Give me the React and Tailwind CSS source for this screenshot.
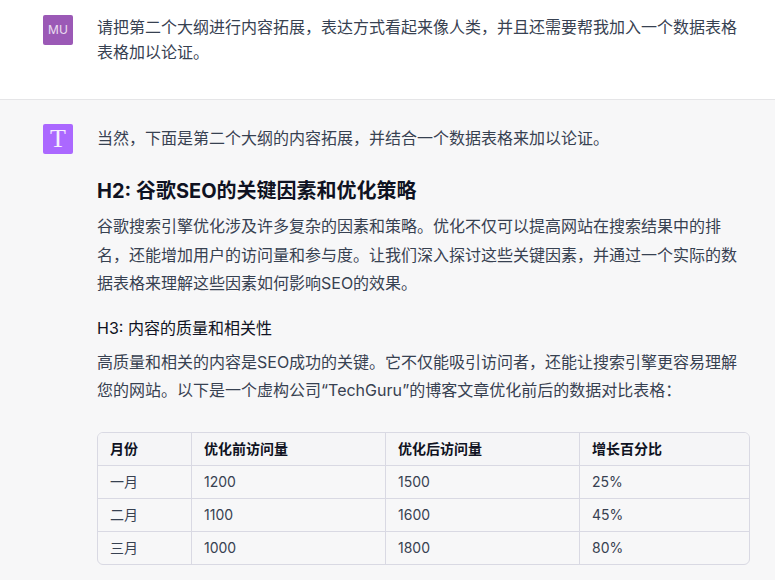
const ROWS = [
  ['一月', '1200', '1500', '25%'],
  ['二月', '1100', '1600', '45%'],
  ['三月', '1000', '1800', '80%'],
];

const HEAD = ['月份', '优化前访问量', '优化后访问量', '增长百分比'];

function Cell({ children, head, last, bottom }) {
  return (
    <div
      className={`flex items-center px-3 ${head ? 'bg-[#f5f5f7] font-semibold text-[#0f1222]' : ''} ${last ? '' : 'border-r border-[#d9d9e3]'} ${bottom ? 'h-[32px]' : 'h-[33px] border-b border-[#d9d9e3]'}`}
    >
      {children}
    </div>
  );
}

export default function App() {
  return (
    <div className="h-[580px] w-[775px] overflow-hidden bg-white text-[#374151] font-['Inter','Noto_Sans_CJK_SC',sans-serif]">
      <div className="flex h-[100px] border-b border-[#e5e5e7] pl-[43px] pr-[25px] pt-[15px]">
        <div className="flex h-[30px] w-[30px] shrink-0 items-center justify-center rounded-[2px] bg-[#9b59b6] text-[12px] text-white/80">
          MU
        </div>
        <p className="ml-6 text-[16px] leading-[25px]">
          请把第二个大纲进行内容拓展，表达方式看起来像人类，并且还需要帮我加入一个数据表格表格加以论证。
        </p>
      </div>
      <div className="flex h-[480px] bg-[#f7f7f8] pl-[43px] pr-[25px] pt-[24px]">
        <div className="flex h-[30px] w-[30px] shrink-0 items-center justify-center rounded-[2px] bg-[#ab68ff] font-['Liberation_Serif',serif] text-[26px] leading-none text-white/90">
          T
        </div>
        <div className="ml-6 min-w-0 flex-1">
          <p className="text-[16px] leading-[28px]">当然，下面是第二个大纲的内容拓展，并结合一个数据表格来加以论证。</p>
          <h2 className="mt-[25px] text-[20px] font-bold leading-[28px] text-[#0f1222]">H2: 谷歌SEO的关键因素和优化策略</h2>
          <p className="mt-[7px] text-[16px] leading-[28.5px]">
            谷歌搜索引擎优化涉及许多复杂的因素和策略。优化不仅可以提高网站在搜索结果中的排名，还能增加用户的访问量和参与度。让我们深入探讨这些关键因素，并通过一个实际的数据表格来理解这些因素如何影响SEO的效果。
          </p>
          <h3 className="mt-[18px] text-[16px] font-normal leading-[24px] text-[#0f1222]">H3: 内容的质量和相关性</h3>
          <p className="mt-[8px] text-[16px] leading-[28.5px]">
            高质量和相关的内容是SEO成功的关键。它不仅能吸引访问者，还能让搜索引擎更容易理解您的网站。以下是一个虚构公司“TechGuru”的博客文章优化前后的数据对比表格：
          </p>
          <div className="mt-[27px] grid w-[653px] grid-cols-[94px_194px_194px_1fr] overflow-hidden rounded-md border border-[#d9d9e3] text-[14px]">
            {HEAD.map((h, i) => (
              <Cell key={h} head last={i === 3}>{h}</Cell>
            ))}
            {ROWS.map((row, r) =>
              row.map((c, i) => (
                <Cell key={c + r + i} last={i === 3} bottom={r === 2}>{c}</Cell>
              ))
            )}
          </div>
        </div>
      </div>
    </div>
  );
}
